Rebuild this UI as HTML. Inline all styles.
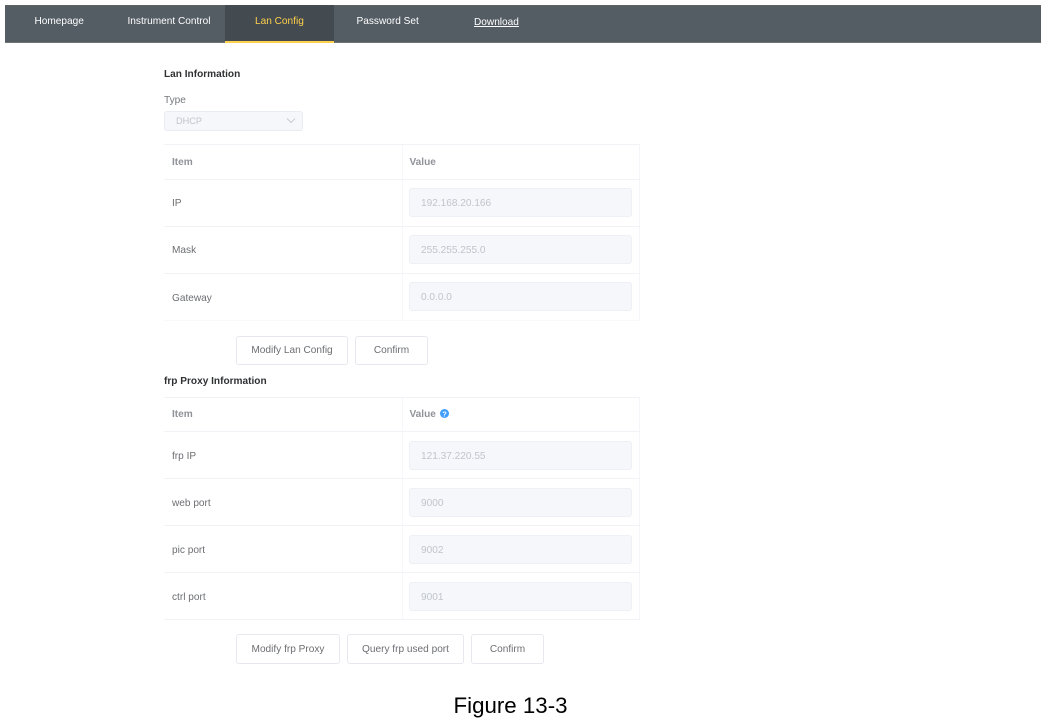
<!DOCTYPE html>
<html>
<head>
<meta charset="utf-8">
<style>
html,body{margin:0;padding:0;background:#fff;}
body{width:1045px;height:724px;position:relative;overflow:hidden;font-family:"Liberation Sans",sans-serif;}
#w{position:absolute;left:0;top:0;width:1045px;height:724px;filter:blur(0.35px);}
.a{position:absolute;white-space:nowrap;}
.nav{left:5px;top:5px;width:1036px;height:38px;background:#545c64;border-top:1px solid #5f625f;border-bottom:1px solid #6f7470;box-sizing:border-box;}
.t{top:16px;font-size:10.1px;line-height:12px;color:#fff;}
.h{font-size:10.1px;font-weight:bold;color:#303133;line-height:12px;}
.tb{left:164px;width:476px;background:#fff;border-top:1px solid #f0f2f6;border-right:1px solid #f3f5f8;box-sizing:border-box;}
.hl{left:164px;width:476px;height:1px;background:#f0f2f6;}
.vl{left:402px;width:1px;background:#f6f7fa;}
.th{left:172px;font-size:10.1px;font-weight:bold;color:#909399;line-height:12px;}
.thv{left:409.5px;font-size:10.1px;font-weight:bold;color:#909399;line-height:12px;}
.td{left:172px;font-size:10.1px;color:#6c6e72;line-height:12px;}
.in{left:409px;width:223px;height:29px;background:#f5f7fa;border:1px solid #edf0f4;border-radius:3px;box-sizing:border-box;font-size:10.1px;color:#c0c4cc;line-height:29px;padding-left:11px;}
.btn{height:29px;background:#fff;border:1px solid #e6e8ed;border-radius:3px;box-sizing:border-box;font-size:10.1px;color:#6c6e72;line-height:28.5px;text-align:center;}
</style>
</head>
<body>
<div id="w">
<div class="a nav"></div>
<div class="a" style="left:225px;top:5px;width:109px;height:38px;background:#434a50;border-bottom:2px solid #ffd04b;box-sizing:border-box;"></div>
<div class="a t" style="left:34.5px;">Homepage</div>
<div class="a t" style="left:127.5px;">Instrument Control</div>
<div class="a t" style="left:255px;color:#ffd04b;">Lan Config</div>
<div class="a t" style="left:356.5px;">Password Set</div>
<div class="a t" style="left:474px;top:16.5px;text-decoration:underline;">Download</div>

<div class="a h" style="left:164px;top:69px;">Lan Information</div>
<div class="a" style="left:164px;top:95px;font-size:10.1px;line-height:12px;color:#75787d;">Type</div>
<div class="a" style="left:164px;top:111px;width:139px;height:20px;background:#f5f7fa;border:1px solid #e9ecf1;border-radius:3px;box-sizing:border-box;font-size:9.2px;color:#c0c4cc;line-height:18.5px;padding-left:11px;">DHCP</div>
<svg class="a" style="left:285px;top:117px;" width="12" height="8" viewBox="0 0 12 8"><path d="M2 1.5 L6 5.5 L10 1.5" fill="none" stroke="#c8ccd3" stroke-width="1"/></svg>

<div class="a tb" style="top:144px;height:177px;"></div>
<div class="a hl" style="top:179px;"></div>
<div class="a hl" style="top:226px;"></div>
<div class="a hl" style="top:273px;"></div>
<div class="a hl" style="top:320px;background:#f7f8fa;"></div>
<div class="a vl" style="top:145px;height:176px;"></div>
<div class="a th" style="top:157px;">Item</div>
<div class="a thv" style="top:157px;">Value</div>
<div class="a td" style="top:198px;">IP</div>
<div class="a td" style="top:245px;">Mask</div>
<div class="a td" style="top:293px;">Gateway</div>
<div class="a in" style="top:188px;">192.168.20.166</div>
<div class="a in" style="top:235px;">255.255.255.0</div>
<div class="a in" style="top:282px;">0.0.0.0</div>
<div class="a btn" style="left:236px;top:336px;width:112px;">Modify Lan Config</div>
<div class="a btn" style="left:355px;top:336px;width:73px;">Confirm</div>

<div class="a h" style="left:164px;top:376px;">frp Proxy Information</div>
<div class="a tb" style="top:397px;height:223px;"></div>
<div class="a hl" style="top:431px;"></div>
<div class="a hl" style="top:478px;"></div>
<div class="a hl" style="top:525px;"></div>
<div class="a hl" style="top:572px;"></div>
<div class="a hl" style="top:619px;"></div>
<div class="a vl" style="top:398px;height:221px;"></div>
<div class="a th" style="top:409px;">Item</div>
<div class="a thv" style="top:409px;">Value</div>
<svg class="a" style="left:440px;top:409px;" width="9" height="9" viewBox="0 0 9 9"><circle cx="4.5" cy="4.5" r="4.5" fill="#409eff"/><text x="4.5" y="7.4" text-anchor="middle" font-family="Liberation Sans" font-size="7.5" font-weight="bold" fill="#fff">?</text></svg>
<div class="a td" style="top:451px;">frp IP</div>
<div class="a td" style="top:498px;">web port</div>
<div class="a td" style="top:545px;">pic port</div>
<div class="a td" style="top:592px;">ctrl port</div>
<div class="a in" style="top:441px;">121.37.220.55</div>
<div class="a in" style="top:488px;">9000</div>
<div class="a in" style="top:535px;">9002</div>
<div class="a in" style="top:582px;">9001</div>
<div class="a btn" style="left:236px;top:634px;width:104px;height:30px;line-height:30.5px;">Modify frp Proxy</div>
<div class="a btn" style="left:347px;top:634px;width:117px;height:30px;line-height:30.5px;">Query frp used port</div>
<div class="a btn" style="left:471px;top:634px;width:73px;height:30px;line-height:30.5px;">Confirm</div>

<div class="a" style="left:453.5px;top:692px;font-size:22.3px;line-height:27px;color:#000;">Figure 13-3</div>
</div>
</body>
</html>
